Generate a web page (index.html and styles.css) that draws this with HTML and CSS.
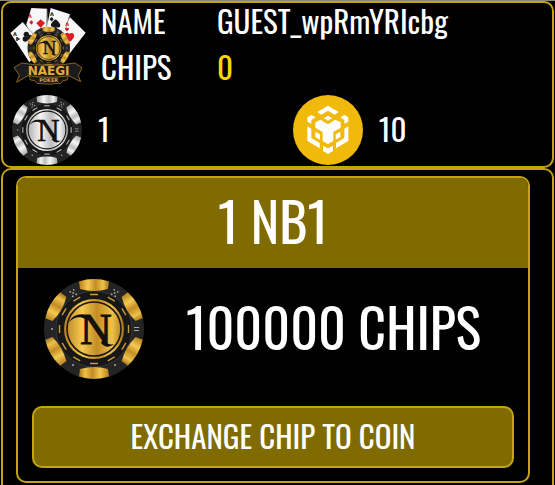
FILE: index.html
```html
<!DOCTYPE html>
<html lang="en">

<head>
    <meta charset="UTF-8">
    <meta name="viewport" content="width=device-width, initial-scale=1.0">
    <title>Naegi Poker</title>
    <link rel="stylesheet" href="styles.css">
</head>

<body>
    <!-- Shared shapes for the chips and the logo -->
    <svg class="defs" aria-hidden="true">
        <defs>
            <linearGradient id="gold">
                <stop offset="0" stop-color="#b97f1c" />
                <stop offset="0.3" stop-color="#f3ca52" />
                <stop offset="0.55" stop-color="#c48c24" />
                <stop offset="0.8" stop-color="#edc24a" />
                <stop offset="1" stop-color="#a97418" />
            </linearGradient>
            <linearGradient id="silver">
                <stop offset="0" stop-color="#a5a5a5" />
                <stop offset="0.35" stop-color="#f6f6f6" />
                <stop offset="0.6" stop-color="#bdbdbd" />
                <stop offset="0.8" stop-color="#f0f0f0" />
                <stop offset="1" stop-color="#a0a0a0" />
            </linearGradient>
            <path id="edge" d="M35 2.4Q50 -2.4 65 2.4L64 10Q50 14 36 10Z" />
            <g id="dash">
                <path d="M46 15.5H54" />
                <path d="M46 15.5H54" transform="rotate(30 50 50)" />
            </g>
            <g id="pips">
                <circle cx="48" cy="6" r="0.9" />
                <circle cx="52" cy="6" r="0.9" />
                <circle cx="50" cy="8.5" r="0.9" />
                <circle cx="48" cy="11" r="0.9" />
                <circle cx="52" cy="11" r="0.9" />
            </g>
            <symbol id="chip" viewBox="0 0 100 100">
                <circle cx="50" cy="50" r="50" fill="#242424" />
                <circle cx="50" cy="50" r="38" fill="#171717" stroke="#353535" />
                <g class="chip-metal">
                    <use href="#edge" />
                    <use href="#edge" transform="rotate(60 50 50)" />
                    <use href="#edge" transform="rotate(120 50 50)" />
                    <use href="#edge" transform="rotate(180 50 50)" />
                    <use href="#edge" transform="rotate(240 50 50)" />
                    <use href="#edge" transform="rotate(300 50 50)" />
                    <circle cx="50" cy="50" r="30" />
                </g>
                <g class="chip-dashes">
                    <use href="#dash" />
                    <use href="#dash" transform="rotate(60 50 50)" />
                    <use href="#dash" transform="rotate(120 50 50)" />
                    <use href="#dash" transform="rotate(180 50 50)" />
                    <use href="#dash" transform="rotate(240 50 50)" />
                    <use href="#dash" transform="rotate(300 50 50)" />
                </g>
                <g fill="#a8a8a8">
                    <use href="#pips" transform="rotate(30 50 50)" />
                    <use href="#pips" transform="rotate(330 50 50)" />
                    <path d="M90 48H95V49H90ZM90 51H95V52H90Z" />
                    <circle cx="8" cy="50" r="1" />
                    <circle cx="29" cy="86" r="1" />
                    <circle cx="71" cy="86" r="1" />
                </g>
                <circle cx="50" cy="50" r="27" fill="none" stroke="#1b1710" stroke-width="1.6" />
                <path d="M25 43C29 35 37 34 43 37L41 40C36 37 30 38 25 43Z" fill="#14110c" />
                <path d="M59 60Q63 67 70 65Q63 71 57 64Z" fill="#14110c" />
                <text class="chip-letter" x="52" y="65" text-anchor="middle">N</text>
            </symbol>
        </defs>
    </svg>

    <section class="card player">
        <header class="player-info">
            <svg class="logo" viewBox="24 20 234 240" role="img" aria-label="Naegi Poker">
                <g fill="#f7f7f7">
                    <path d="M28 98L65 65L130 140L85 186Z" />
                    <path d="M91 23L138 25L142 120L100 130L76 72Z" />
                    <path d="M149 23L207 42L180 125L132 110Z" />
                    <path d="M207 51L254 97L198 170L160 120Z" />
                </g>
                <path d="M65 65L102 107M138 25L136 85M207 42L194 85" stroke="#777" stroke-width="2" />
                <g fill="#d81c24">
                    <path d="M119 57L132 68L119 83L106 69Z" />
                    <path d="M207 124C180 110 194 90 205 100C219 92 228 109 207 124Z" />
                </g>
                <g fill="#171717">
                    <path d="M164 57C188 75 176 87 166 79L170 88H157L161 79C149 84 142 71 164 57Z" />
                    <circle cx="76" cy="102" r="8" />
                    <circle cx="87" cy="111" r="8" />
                    <circle cx="73" cy="116" r="8" />
                    <path d="M78 108L98 122L88 128Z" />
                </g>
                <g class="card-mark">
                    <text x="81" y="54" fill="#d81c24">A</text>
                    <text x="147" y="47" fill="#171717">A</text>
                    <text x="193" y="76" fill="#d81c24">A</text>
                    <text x="36" y="106" fill="#171717">A</text>
                </g>
                <g fill="#d81c24">
                    <path d="M91 60L97 66L91 73L85 66Z" />
                    <path d="M198 93C188 87 193 79 198 84C203 79 208 87 198 93Z" />
                </g>
                <g fill="#171717">
                    <path d="M152 50C161 57 157 62 153 59L155 63H149L151 59C147 62 143 57 152 50Z" />
                    <circle cx="48" cy="113" r="3" />
                    <circle cx="53" cy="116" r="3" />
                    <circle cx="48" cy="119" r="3" />
                </g>
                <use class="gold" href="#chip" x="79" y="79" width="128" height="128" />
                <path d="M82 218Q143 240 204 218L198 239L186 241L180 249Q143 254 108 249L101 241L88 239Z" fill="#171717" stroke="#bd8529" stroke-width="2" />
                <path d="M39 202L62 188Q143 202 222 188L243 202L232 226L239 244L203 226Q143 236 81 226L47 246L55 224Z" fill="#1b1b1b" stroke="#c48c2b" stroke-width="2" />
                <text class="logo-name" x="143" y="223" text-anchor="middle">NAEGI</text>
                <text class="logo-sub" x="143" y="246" text-anchor="middle">POKER</text>
            </svg>
            <dl class="details">
                <dt>NAME</dt>
                <dd>GUEST_wpRmYRIcbg</dd>
                <dt>CHIPS</dt>
                <dd class="chips-total">0</dd>
            </dl>
        </header>
        <div class="balances">
            <div class="balance">
                <svg class="coin silver" role="img" aria-label="Silver chip">
                    <use href="#chip" />
                </svg>
                <span>1</span>
            </div>
            <div class="balance">
                <svg class="coin" viewBox="24 30 210 210" role="img" aria-label="BNB">
                    <circle cx="129" cy="135" r="105" fill="#f0b90b" />
                    <g fill="#fff">
                        <path d="M97 81L129 62L161 81L149 89L129 77L109 89Z" />
                        <path d="M129 92L142 100L129 107L116 100Z" />
                        <path d="M67 97L79 90L92 97L79 105V116L67 110Z" />
                        <path d="M190 97L178 90L166 97L178 105V116L190 110Z" />
                        <path d="M91 112L106 104L129 118L151 104L167 112V128L145 141V168L129 177L113 168V141L91 128Z" />
                        <path d="M67 124L79 131V159L104 174V190L67 168Z" />
                        <path d="M190 124L178 131V159L153 174V190L190 168Z" />
                        <path d="M91 140L105 148V164L91 156Z" />
                        <path d="M166 140L152 148V164L166 156Z" />
                        <path d="M114 182L129 190L144 182V198L129 207L114 198Z" />
                    </g>
                </svg>
                <span>10</span>
            </div>
        </div>
    </section>

    <main class="card exchange">
        <section class="offer">
            <h1>1 NB1</h1>
            <div class="offer-price">
                <svg class="offer-chip gold" role="img" aria-label="Gold chip">
                    <use href="#chip" />
                </svg>
                <p>100000 CHIPS</p>
            </div>
            <button type="button" class="exchange-button">EXCHANGE CHIP TO COIN</button>
        </section>
    </main>
</body>

</html>
```
FILE: styles.css
```css
* {
    box-sizing: border-box;
}

body {
    display: flex;
    flex-direction: column;
    min-height: 100vh;
    margin: 0;
    padding: 0 1px;
    border-top: 1px solid #85877a;
    background-color: #000;
    color: #fff;
    font-family: Oswald, "Liberation Sans Narrow", "Roboto Condensed", "Open Sans Condensed", "Liberation Sans", sans-serif;
    font-size: 31px;
    line-height: 36px;
}

.defs {
    position: absolute;
    width: 0;
    height: 0;
}

.card {
    border: 2px solid #c4a411;
    border-radius: 10px;
}

/* Player box */
.player-info {
    display: flex;
    gap: 14px;
    padding-left: 6px;
}

.logo {
    flex: none;
    width: 78px;
    height: 80px;
    margin-top: 4px;
}

.details {
    display: grid;
    grid-template-columns: 100px auto;
    align-content: start;
    gap: 12px 16px;
    margin: 0;
    line-height: 34px;
}

.details dd {
    margin: 0;
}

.details .chips-total {
    color: #ffd700;
}

.balances {
    display: grid;
    grid-template-columns: 52fr 48fr;
    padding: 8px 0 1px 9px;
}

.balance {
    display: flex;
    align-items: center;
    gap: 16px;
}

.balance span {
    padding-bottom: 4px;
}

.coin {
    width: 70px;
    height: 70px;
}

/* Chip colours */
.gold {
    --metal: url(#gold);
    --dash: #c99a35;
}

.silver {
    --metal: url(#silver);
    --dash: #c4c4c4;
}

.chip-metal {
    fill: var(--metal);
}

.chip-dashes {
    stroke: var(--dash);
    stroke-width: 1.4;
}

.chip-letter {
    fill: #14110c;
    stroke: #14110c;
    stroke-width: 1;
    font-family: "Liberation Serif", serif;
    font-size: 44px;
}

.card-mark {
    font-family: "DejaVu Sans", sans-serif;
    font-size: 15px;
    font-weight: bold;
}

.logo-name {
    fill: #e4aa3e;
    font-family: "DejaVu Sans", sans-serif;
    font-size: 36px;
    font-weight: bold;
}

.logo-sub {
    fill: #d5a044;
    font-family: "DejaVu Sans", sans-serif;
    font-size: 15px;
    font-weight: bold;
}

/* Exchange box */
.exchange {
    flex: 1;
    padding: 6px 22px 2px 13px;
    border-bottom: 0;
    border-bottom-left-radius: 0;
    border-bottom-right-radius: 0;
}

.offer {
    overflow: hidden;
    border: 2px solid #c4a411;
    border-radius: 10px;
}

.offer h1 {
    margin: 0;
    padding-bottom: 6px;
    background-color: #806b00;
    font-size: 54px;
    font-weight: normal;
    line-height: 84px;
    text-align: center;
}

.offer-price {
    display: flex;
    align-items: center;
    gap: 42px;
    padding: 11px 26px 27px;
}

.offer-chip {
    flex: none;
    width: 100px;
    height: 100px;
}

.offer-price p {
    margin: 0;
    padding-bottom: 6px;
    font-size: 54px;
    line-height: 60px;
}

.exchange-button {
    display: block;
    width: calc(100% - 28px);
    height: 62px;
    margin: 0 14px 13px;
    padding: 0 0 4px;
    border: 2px solid #c4a411;
    border-radius: 10px;
    background-color: #806b00;
    color: #fff;
    font: inherit;
    cursor: pointer;
}
```
